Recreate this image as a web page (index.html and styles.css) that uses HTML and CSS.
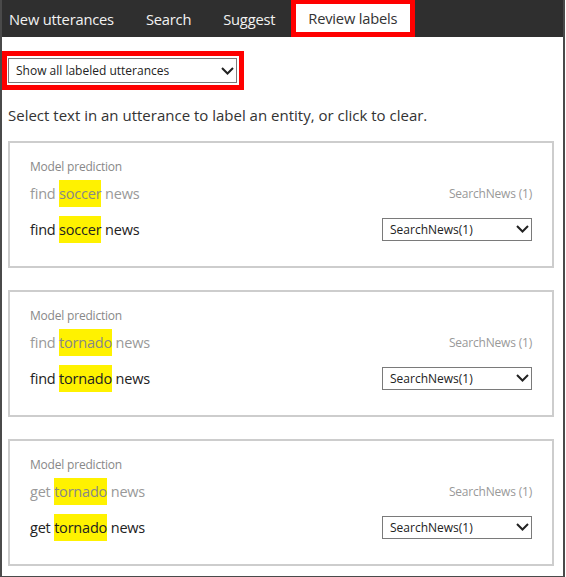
FILE: index.html
```html
<!DOCTYPE html>
<html>
<head>
<meta charset="utf-8">
<link rel="stylesheet" href="styles.css">
</head>
<body>
<div class="frame">
  <nav class="tabs">
    <div class="tab">New utterances</div>
    <div class="tab">Search</div>
    <div class="tab">Suggest</div>
    <div class="tab active">Review labels</div>
  </nav>
  <main class="content">
    <div class="filter-mark">
      <div class="select wide">
        <span>Show all labeled utterances</span>
        <svg class="chev" width="13" height="8" viewBox="0 0 13 8"><path d="M1 1 L6.5 6.5 L12 1" fill="none" stroke="#222" stroke-width="2"/></svg>
      </div>
    </div>
    <p class="hint">Select text in an utterance to label an entity, or click to clear.</p>

    <section class="card">
      <div class="caption">Model prediction</div>
      <div class="row pred">
        <div class="utt">find <mark>soccer</mark> news</div>
        <div class="intent">SearchNews (1)</div>
      </div>
      <div class="row">
        <div class="utt">find <mark>soccer</mark> news</div>
        <div class="select small">
          <span>SearchNews(1)</span>
          <svg class="chev" width="13" height="8" viewBox="0 0 13 8"><path d="M1 1 L6.5 6.5 L12 1" fill="none" stroke="#222" stroke-width="2"/></svg>
        </div>
      </div>
    </section>

    <section class="card">
      <div class="caption">Model prediction</div>
      <div class="row pred">
        <div class="utt">find <mark>tornado</mark> news</div>
        <div class="intent">SearchNews (1)</div>
      </div>
      <div class="row">
        <div class="utt">find <mark>tornado</mark> news</div>
        <div class="select small">
          <span>SearchNews(1)</span>
          <svg class="chev" width="13" height="8" viewBox="0 0 13 8"><path d="M1 1 L6.5 6.5 L12 1" fill="none" stroke="#222" stroke-width="2"/></svg>
        </div>
      </div>
    </section>

    <section class="card">
      <div class="caption">Model prediction</div>
      <div class="row pred">
        <div class="utt">get <mark>tornado</mark> news</div>
        <div class="intent">SearchNews (1)</div>
      </div>
      <div class="row">
        <div class="utt">get <mark>tornado</mark> news</div>
        <div class="select small">
          <span>SearchNews(1)</span>
          <svg class="chev" width="13" height="8" viewBox="0 0 13 8"><path d="M1 1 L6.5 6.5 L12 1" fill="none" stroke="#222" stroke-width="2"/></svg>
        </div>
      </div>
    </section>
  </main>
</div>
</body>
</html>
```
FILE: styles.css
```css
* { box-sizing: border-box; }
html, body { margin: 0; padding: 0; background: #fff; }
body { font-family: "Open Sans", "Noto Sans", sans-serif; color: #222; }

.frame {
  width: 565px;
  height: 577px;
  border-left: 2px solid #4a4a4a;
  border-right: 2px solid #4a4a4a;
  border-bottom: 1px solid #4a4a4a;
  overflow: hidden;
  background: #fff;
}

.tabs {
  display: flex;
  height: 37px;
  background: #2f2f2f;
}
.tab {
  display: flex;
  align-items: center;
  padding: 0 16px;
  color: #f2f2f2;
  font-size: 14.7px;
  letter-spacing: -0.2px;
  height: 37px;
}
.tab:first-child { padding-left: 7px; }
.tab.active {
  background: #fff;
  color: #333;
  border: 5px solid #f00;
  border-top-width: 4px;
  padding: 0 13px 0 12px;
}

.content { padding: 14px 8px 0 6px; }

.filter-mark {
  display: inline-block;
  margin-left: -6px;
  border: 5px solid #f00;
  padding: 2px 2px 2px 1px;
}

.select {
  display: flex;
  align-items: center;
  justify-content: space-between;
  border: 1px solid #7a7a7a;
  background: #fff;
  color: #222;
  font-size: 12px;
}
.select.wide { width: 229px; height: 25px; padding: 0 2px 0 7px; }
.select.small { width: 150px; height: 23px; padding: 0 2px 0 7px; }
.chev { display: block; }

.hint {
  margin: 15px 0 16px 0;
  font-size: 15px;
  color: #333;
}

.card {
  width: 546px;
  height: 127px;
  border: 2px solid #cdcdcd;
  padding: 15px 20px 0 20px;
  margin-bottom: 22px;
}
.caption { font-size: 12px; color: #888; line-height: 18px; letter-spacing: -0.2px; }
.row {
  display: flex;
  align-items: center;
  justify-content: space-between;
  height: 24px;
}
.row.pred { margin-top: 5px; margin-bottom: 12px; }
.utt { font-size: 14.5px; color: #222; letter-spacing: -0.2px; }
.pred .utt { color: #999; }
.utt mark { background: #fff200; color: inherit; padding: 4px 0; }
.pred .utt mark { color: #888; }
.intent { font-size: 12px; color: #999; letter-spacing: -0.2px; }
```
